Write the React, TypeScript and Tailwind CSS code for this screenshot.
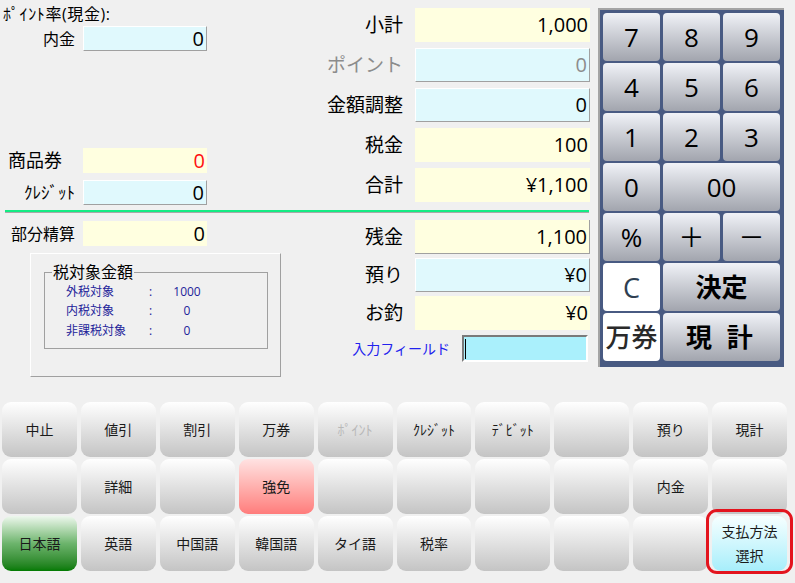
import React from 'react';

const FONT = { fontFamily: '"Open Sans", "Noto Sans CJK JP", sans-serif' };

const YELLOW = 'bg-[#ffffe0]';
const CYAN = 'bg-[#e0f9fd] border border-t-white border-l-white border-r-[#a0a0a0] border-b-[#a0a0a0]';

interface BoxProps {
  value: string;
  tone: 'yellow' | 'cyan' | 'yellowEdge';
  className?: string;
  valueClass?: string;
}

const ValueBox: React.FC<BoxProps> = ({ value, tone, className = '', valueClass = 'text-black' }) => {
  const skin =
    tone === 'yellow'
      ? YELLOW
      : tone === 'cyan'
      ? CYAN
      : 'bg-[#ffffe0] border-r border-b border-[#a0a0a0]';
  return (
    <div className={`${skin} ${className} flex items-center justify-end pr-[2px] text-[20px] leading-none ${valueClass}`}>
      {value}
    </div>
  );
};

// rows of the middle column (label + amount)
const MidRow: React.FC<{ label: string; value: string; tone: BoxProps['tone']; muted?: boolean }> = ({
  label,
  value,
  tone,
  muted
}) => (
  <div className="flex items-center h-[34px]">
    <div className={`flex-1 text-right pr-[12px] text-[19px] ${muted ? 'text-[#8c8c8c]' : 'text-black'}`}>{label}</div>
    <ValueBox value={value} tone={tone} className="w-[175px] h-full" valueClass={muted ? 'text-[#8c8c8c]' : 'text-black'} />
  </div>
);

const KEYS: { label: string; span?: boolean; white?: boolean; cls?: string }[] = [
  { label: '7' },
  { label: '8' },
  { label: '9' },
  { label: '4' },
  { label: '5' },
  { label: '6' },
  { label: '1' },
  { label: '2' },
  { label: '3' },
  { label: '0' },
  { label: '00', span: true },
  { label: '%', cls: 'text-[25px]' },
  { label: '＋', cls: 'text-[22px]' },
  { label: '－', cls: 'text-[22px]' },
  { label: 'C', white: true, cls: 'text-[#2f3f52] text-[27px] font-medium' },
  { label: '決定', span: true, cls: 'font-bold text-[25px]' },
  { label: '万券', white: true, cls: 'text-[25px] font-medium text-[#2a2a2a]' },
  { label: '現 計', span: true, cls: 'font-bold text-[25px] tracking-[4px]' }
];

type Tone = 'plain' | 'pink' | 'green' | 'aqua';

const GRID: { label: string; tone?: Tone; off?: boolean }[][] = [
  [
    { label: '中止' },
    { label: '値引' },
    { label: '割引' },
    { label: '万券' },
    { label: 'ﾎﾟｲﾝﾄ', off: true },
    { label: 'ｸﾚｼﾞｯﾄ' },
    { label: 'ﾃﾞﾋﾞｯﾄ' },
    { label: '' },
    { label: '預り' },
    { label: '現計' }
  ],
  [
    { label: '' },
    { label: '詳細' },
    { label: '' },
    { label: '強免', tone: 'pink' },
    { label: '' },
    { label: '' },
    { label: '' },
    { label: '' },
    { label: '内金' },
    { label: '' }
  ],
  [
    { label: '日本語', tone: 'green' },
    { label: '英語' },
    { label: '中国語' },
    { label: '韓国語' },
    { label: 'タイ語' },
    { label: '税率' },
    { label: '' },
    { label: '' },
    { label: '' },
    { label: '支払方法\n選択', tone: 'aqua' }
  ]
];

const TONES: Record<Tone, string> = {
  plain: 'from-white to-[#c4c4c4]',
  pink: 'from-[#ffe2e2] to-[#ff7c7c]',
  green: 'from-[#eef8ee] via-[#6cb46c] to-[#007a00]',
  aqua: 'from-[#f6ffff] to-[#a6eefb]'
};

export default function App() {
  return (
    <div className="w-[795px] h-[583px] bg-[#f0f0f0] overflow-hidden text-black" style={FONT}>
      {/* upper area */}
      <div className="flex h-[395px]">
        <div className="w-[598px] flex flex-col">
          <div className="flex h-[210px]">
            {/* left upper */}
            <div className="w-[300px] flex flex-col">
              <div className="pl-[3px] pt-[5px] text-[16px] leading-[19px] tracking-[0.6px]">ﾎﾟｲﾝﾄ率(現金):</div>
              <div className="flex items-center h-[25px] mt-[2px]">
                <div className="w-[83px] text-right pr-[8px] text-[16px]">内金</div>
                <ValueBox value="0" tone="cyan" className="w-[124px] h-full" />
              </div>
              <div className="flex items-center h-[25px] mt-[97px]">
                <div className="w-[83px] pl-[8px] text-[18px]">商品券</div>
                <ValueBox value="0" tone="yellow" className="w-[124px] h-full" valueClass="text-[#ff1010]" />
              </div>
              <div className="flex items-center h-[25px] mt-[7px]">
                <div className="w-[83px] text-right pr-[8px] text-[17px]">ｸﾚｼﾞｯﾄ</div>
                <ValueBox value="0" tone="cyan" className="w-[124px] h-full" />
              </div>
            </div>
            {/* middle upper */}
            <div className="w-[298px] pr-[8px] pt-[8px] flex flex-col gap-[6px]">
              <MidRow label="小計" value="1,000" tone="yellow" />
              <MidRow label="ポイント" value="0" tone="cyan" muted />
              <MidRow label="金額調整" value="0" tone="cyan" />
              <MidRow label="税金" value="100" tone="yellow" />
              <MidRow label="合計" value="¥1,100" tone="yellow" />
            </div>
          </div>
          <div className="ml-[5px] w-[584px] h-[2px] bg-[#14ec84]" />
          <div className="ml-[5px] w-[584px] h-px bg-[#a8a8a8]" />
          <div className="flex">
            {/* left lower */}
            <div className="w-[300px] flex flex-col">
              <div className="flex items-center h-[25px] mt-[8px]">
                <div className="w-[83px] text-right pr-[8px] text-[16px]">部分精算</div>
                <ValueBox value="0" tone="yellow" className="w-[124px] h-full" />
              </div>
              <div className="ml-[30px] mt-[7px] w-[251px] h-[124px] border border-t-white border-l-white border-r-[#a0a0a0] border-b-[#a0a0a0] pt-[8px] pl-[13px] pr-[12px]">
                <fieldset className="border border-[#a0a0a0] h-[87px]">
                  <legend className="ml-[7px] px-[1px] text-[16px] leading-[20px]">税対象金額</legend>
                  <div className="text-[12px] text-[#23239a]">
                    {[
                      ['外税対象', '1000'],
                      ['内税対象', '0'],
                      ['非課税対象', '0']
                    ].map(([k, v]) => (
                      <div key={k} className="flex items-center h-[19.5px]">
                        <div className="w-[104px] pl-[21px]">{k}</div>
                        <div className="w-[6px]">:</div>
                        <div className="w-[64px] text-center">{v}</div>
                      </div>
                    ))}
                  </div>
                </fieldset>
              </div>
            </div>
            {/* middle lower */}
            <div className="w-[298px] pr-[8px] pt-[7px] flex flex-col gap-[4px]">
              <MidRow label="残金" value="1,100" tone="yellowEdge" />
              <MidRow label="預り" value="¥0" tone="cyan" />
              <MidRow label="お釣" value="¥0" tone="yellow" />
              <div className="flex items-center justify-end h-[27px] mt-[1px] pr-[2px]">
                <div className="text-[14px] text-[#2222ee] mr-[12px]">入力フィールド</div>
                <div className="w-[126px] h-full bg-[#aaf0fc] border-2 border-t-[#7a7a7a] border-l-[#7a7a7a] border-r-white border-b-white flex items-center pl-[1px]">
                  <div className="w-px h-[20px] bg-black" />
                </div>
              </div>
            </div>
          </div>
        </div>

        {/* keypad */}
        <div className="mt-[8px] w-[186px] h-[359px] bg-[#485a82] border-l-2 border-t-2 border-[#a4a4a4] pt-[3px] pl-[3px] pr-[4px] pb-[6px]">
          <div className="grid grid-cols-[57px_57px_57px] grid-rows-[repeat(7,48px)] gap-x-[3px] gap-y-[2px]">
            {KEYS.map((k, i) => (
              <div
                key={i}
                className={`${k.span ? 'col-span-2' : ''} ${
                  k.white ? 'bg-white' : 'bg-linear-to-b from-[#f0f2f7] to-[#a2a5ae]'
                } rounded-[4px] flex items-center justify-center text-[26px] leading-none ${k.cls ?? ''}`}
              >
                {k.label}
              </div>
            ))}
          </div>
        </div>
      </div>

      {/* function buttons */}
      <div className="mt-[7px] ml-[2px] w-[785px] grid grid-cols-10 grid-rows-[repeat(3,55px)] gap-x-[4px] gap-y-[2px]">
        {GRID.flat().map((b, i) => (
          <div key={i} className="relative">
            {b.tone === 'aqua' && (
              <div className="absolute -left-[6px] -right-[6px] -top-[7px] -bottom-[3px] border-[3px] border-[#e3141e] rounded-[11px]" />
            )}
            <div
              className={`relative h-full rounded-[9px] bg-linear-to-b ${TONES[b.tone ?? 'plain']} flex items-center justify-center text-center whitespace-pre-line text-[14px] leading-[24px] ${
                b.off ? 'text-[#b8b8b8]' : 'text-[#1a1a1a]'
              }`}
            >
              {b.label}
            </div>
          </div>
        ))}
      </div>
    </div>
  );
}
